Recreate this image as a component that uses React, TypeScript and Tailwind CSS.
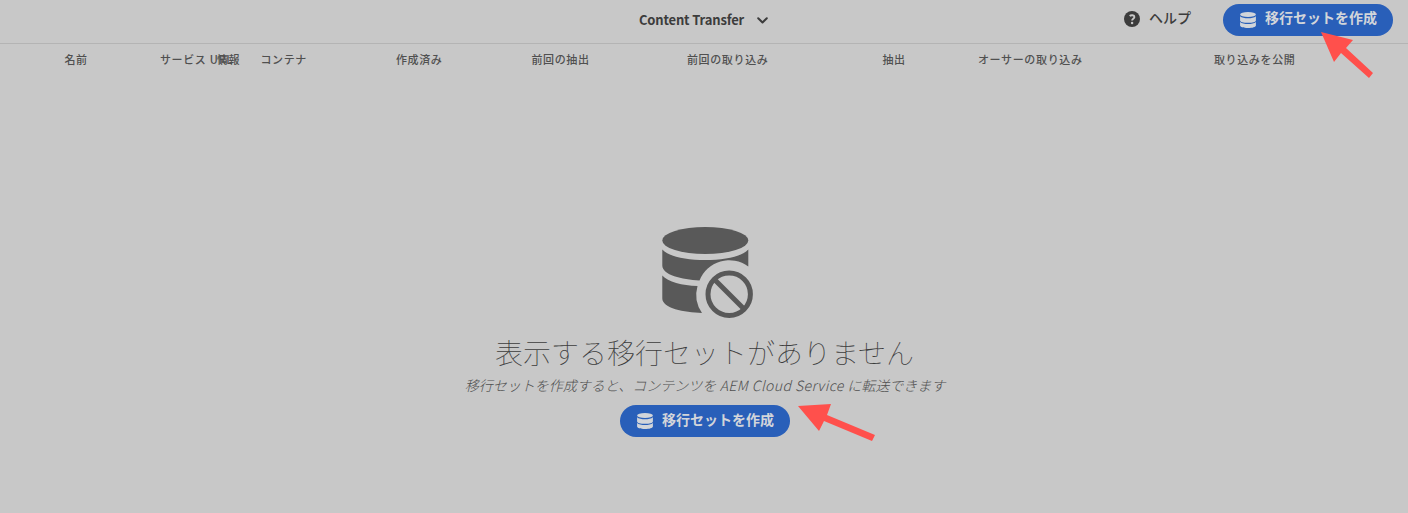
import React from "react";

const columns = [
  { label: "名前", width: "w-[95.5px]" },
  { label: "サービス URL", width: "w-[57px]" },
  { label: "情報", width: "w-[43.5px]" },
  { label: "コンテナ", width: "w-[135.5px]" },
  { label: "作成済み", width: "w-[135.5px]" },
  { label: "前回の抽出", width: "w-[155.5px]" },
  { label: "前回の取り込み", width: "w-[195.5px]" },
  { label: "抽出", width: "w-[95.5px]" },
  { label: "オーサーの取り込み", width: "w-[236px]" },
  { label: "取り込みを公開", width: "w-[100px]" },
];

function DataIcon() {
  return (
    <svg className="h-4 w-4 shrink-0" viewBox="0 0 16 16" fill="currentColor">
      <ellipse cx="8" cy="2.600" rx="7.900" ry="2.500" />
      <path d="M.1 4.200C1.600 5.700 4.800 6.200 8 6.200s6.400-.5 7.900-2v4.200c0 1.600-3.500 2.400-7.900 2.400S.1 10 .1 8.400z" />
      <path d="M.1 9.900c1.500 1.500 4.700 2 7.900 2s6.400-.5 7.900-2v3.500c0 1.600-3.500 2.500-7.900 2.500s-7.900-.9-7.900-2.500z" />
    </svg>
  );
}

function CreateButton({ labelClass }: { labelClass: string }) {
  return (
    <button className="flex h-8 w-[170px] items-center gap-[9px] rounded-full bg-[#295fb9] pl-[17px] text-[14px] leading-5 font-bold whitespace-nowrap text-[#d2d5da]">
      <DataIcon />
      <span className={labelClass}>移行セットを作成</span>
    </button>
  );
}

function EmptyIcon() {
  return (
    <svg className="ml-[5px] h-[92px] w-[92px]" viewBox="0 0 92 92" fill="#595959">
      <ellipse cx="43.300" cy="13.500" rx="43" ry="13.500" />
      <path d="M.3 22.500C7 29.500 24 33 43.300 33s36.300-3.500 43-10.500V39.500A32 32 0 0 0 37.500 53.500C20 52.500 .3 48 .3 38.500z" />
      <path d="M.3 48.500C6 55 20 58.500 35.500 59A32 32 0 0 0 40 86C22 85.500 .3 81 .3 71.500z" />
      <circle cx="67.200" cy="67.300" r="21.200" fill="none" stroke="#595959" strokeWidth="5" />
      <path d="M53 53l28.500 28.500" fill="none" stroke="#595959" strokeWidth="5" />
    </svg>
  );
}

export default function App() {
  return (
    <div className="relative flex h-[513px] w-[1408px] flex-col overflow-hidden bg-[#c8c8c8] font-['Noto_Sans_CJK_JP',sans-serif] text-[#3c3c3c]">
      <header className="grid h-11 shrink-0 grid-cols-[1fr_132px_1fr] border-b border-[#b4b4b4]">
        <span />
        <button className="flex h-10 items-center gap-3 text-[13px] font-bold tracking-[-0.15px] whitespace-nowrap">
          <span className="w-[107px]">Content Transfer</span>
          <svg className="h-[7px] w-[11px]" viewBox="0 0 11 7" fill="none" stroke="currentColor" strokeWidth="2" strokeLinecap="round" strokeLinejoin="round">
            <path d="M1.200 1.200l4.300 4.300 4.300-4.300" />
          </svg>
        </button>
        <div className="flex items-start justify-end pt-1 pr-[15px]">
          <button className="mr-8 flex h-8 items-center gap-[9px] text-[14px] leading-5 font-medium">
            <svg className="mt-[-2px] h-4 w-4" viewBox="0 0 16 16">
              <circle cx="8" cy="8" r="8" fill="#3c3c3c" />
              <path d="M5.700 5C7 3.800 10.400 3.900 10.400 6c0 1.700-2.300 1.800-2.300 3.500" fill="none" stroke="#c8c8c8" strokeWidth="1.900" />
              <circle cx="8.100" cy="12" r="1.200" fill="#c8c8c8" />
            </svg>
            <span className="-mt-1.5">ヘルプ</span>
          </button>
          <CreateButton labelClass="-mt-1.5" />
        </div>
      </header>
      <div className="flex h-[30px] shrink-0 items-center pl-[64.4px] text-[11px] leading-4 font-medium tracking-[0.66px] text-[#505050]">
        {columns.map((c) => (
          <div key={c.label} className={`${c.width} shrink-0 whitespace-nowrap`}>
            {c.label}
          </div>
        ))}
      </div>
      <main className="flex flex-col items-center pt-[153px] pl-[2px]">
        <EmptyIcon />
        <h1 className="mt-[15px] mr-px text-[28px] leading-9 font-thin text-[#3c3c3c]">表示する移行セットがありません</h1>
        <p className="mt-[5px] mb-[9px] text-[14px] leading-[21px] font-light text-[#505050] italic">
          移行セットを作成すると、コンテンツを<span className="tracking-[0.42px]"> AEM Cloud Service </span>に転送できます
        </p>
        <CreateButton labelClass="-mt-1" />
      </main>
      <svg className="pointer-events-none absolute inset-0 h-[513px] w-[1408px]" viewBox="0 0 1408 513" fill="#ff504c">
        <path d="M1321 32L1353 40 1346 48 1373 73 1369 78 1341 53 1334 62z" />
        <path d="M798 406L831 404 827 415 875 435 872 441 824 421 819 431z" />
      </svg>
    </div>
  );
}
